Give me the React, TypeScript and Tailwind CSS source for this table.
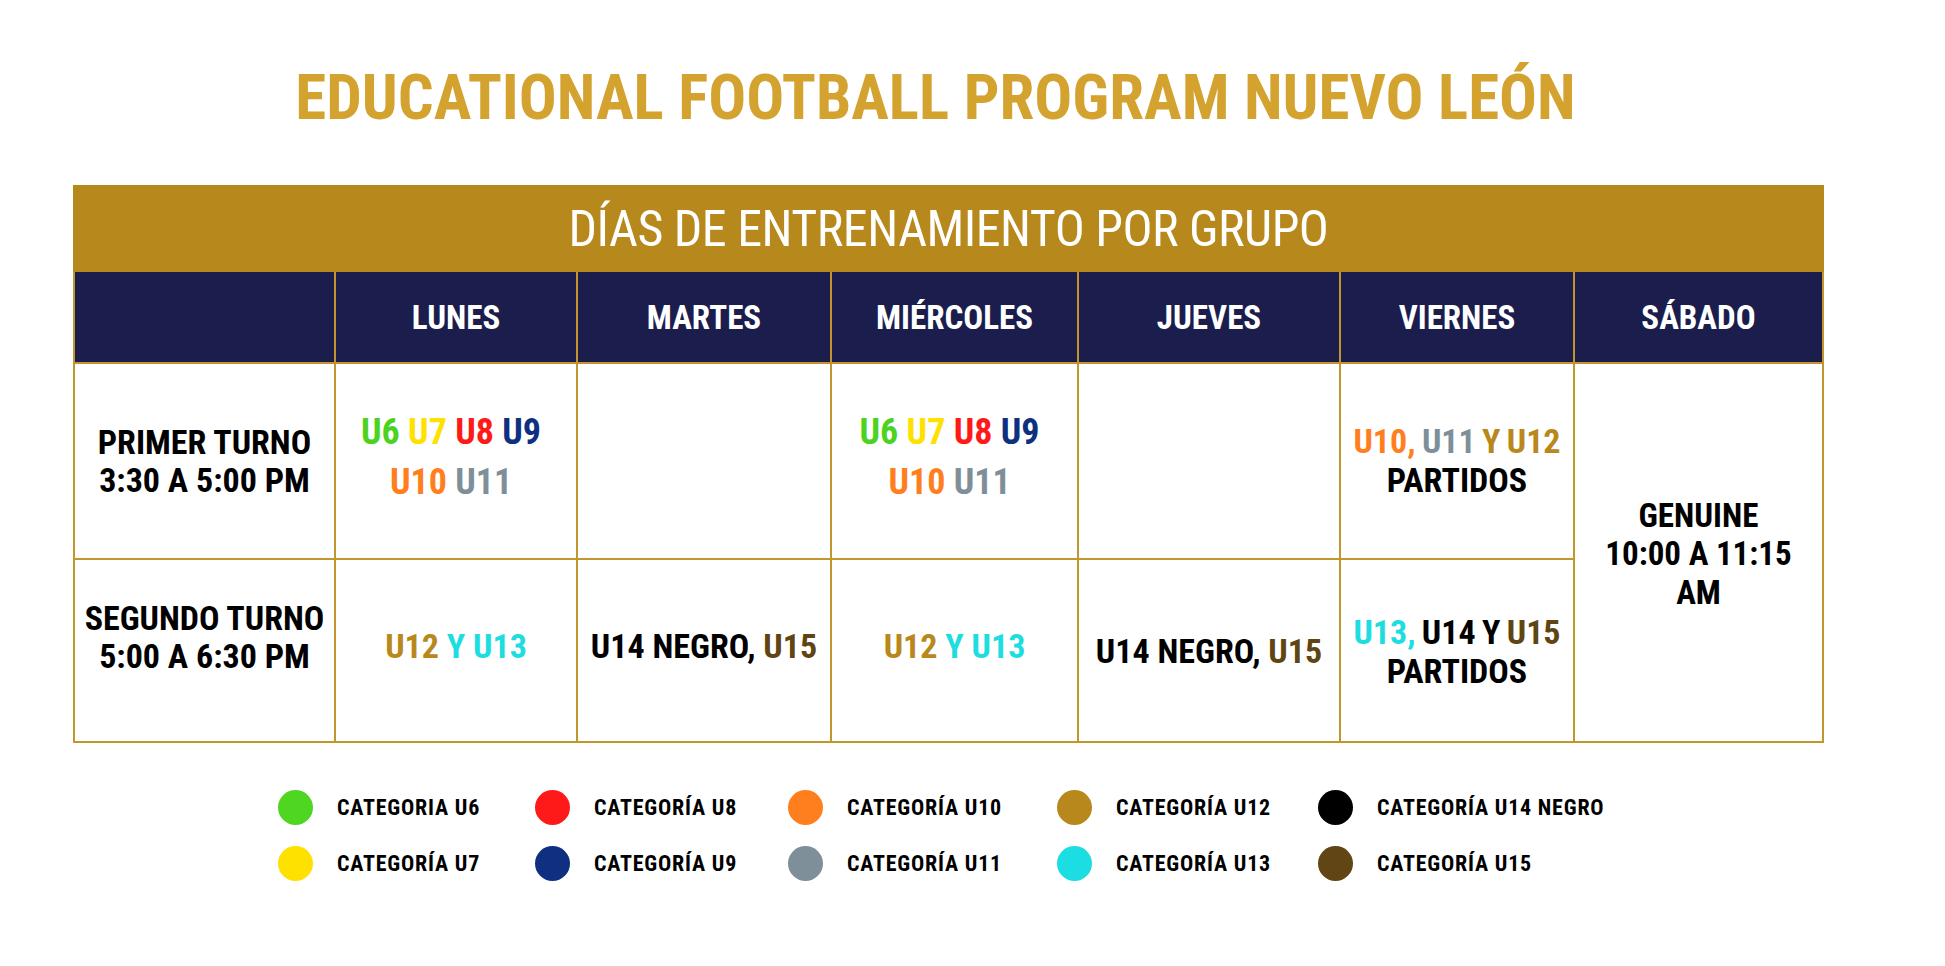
import React from 'react';

const U6 = 'text-[#4cd31f]';
const U7 = 'text-[#ffe100]';
const U8 = 'text-[#ff1a1a]';
const U9 = 'text-[#0f2f80]';
const U10 = 'text-[#ff7f1e]';
const U11 = 'text-[#7f8f99]';
const U12 = 'text-[#b8881c]';
const U13 = 'text-[#1edde0]';
const U15 = 'text-[#5f4512]';

function Head({ children }: { children: React.ReactNode }) {
  return (
    <div className="bg-[#1b1e4d] flex items-center justify-center text-white text-[33px] font-bold leading-none">
      {children}
    </div>
  );
}

function Cell({ children, className = '' }: { children?: React.ReactNode; className?: string }) {
  return (
    <div className={`bg-white flex flex-col items-center justify-center text-center text-black font-bold text-[34px] ${className}`}>
      {children}
    </div>
  );
}

function Early() {
  return (
    <div className="flex flex-col items-center leading-[50px] text-[36px] mb-[9px] mr-[10px] whitespace-nowrap">
      <div>
        <span className={U6}>U6</span> <span className={U7}>U7</span> <span className={U8}>U8</span>{' '}
        <span className={U9}>U9</span>
      </div>
      <div>
        <span className={U10}>U10</span> <span className={U11}>U11</span>
      </div>
    </div>
  );
}

function U12U13() {
  return (
    <div className="leading-[40px] text-[34px] mb-[10px] whitespace-nowrap">
      <span className={U12}>U12</span> <span className={U13}>Y U13</span>
    </div>
  );
}

function U14U15({ className = '' }: { className?: string }) {
  return (
    <div className={`leading-[40px] text-[34px] whitespace-nowrap ${className}`}>
      U14 NEGRO, <span className={U15}>U15</span>
    </div>
  );
}

const legend: { color: string; label: string }[] = [
  { color: 'bg-[#4fd620]', label: 'CATEGORIA U6' },
  { color: 'bg-[#ff1a1a]', label: 'CATEGORÍA U8' },
  { color: 'bg-[#ff7f1e]', label: 'CATEGORÍA U10' },
  { color: 'bg-[#b8881c]', label: 'CATEGORÍA U12' },
  { color: 'bg-black', label: 'CATEGORÍA U14 NEGRO' },
  { color: 'bg-[#ffe100]', label: 'CATEGORÍA U7' },
  { color: 'bg-[#0f3080]', label: 'CATEGORÍA U9' },
  { color: 'bg-[#7f8f99]', label: 'CATEGORÍA U11' },
  { color: 'bg-[#1cdde2]', label: 'CATEGORÍA U13' },
  { color: 'bg-[#614514]', label: 'CATEGORÍA U15' },
];

export default function App() {
  return (
    <div className="min-h-screen w-full bg-white font-['Roboto_Condensed','Roboto',sans-serif] [font-stretch:75%]">
      <div className="ml-[73px] w-[1751px] pt-[66px]">
        <h1 className="text-center text-[63px] leading-[64px] font-bold text-[#d4a22e] pr-[26px]">
          EDUCATIONAL FOOTBALL PROGRAM NUEVO LEÓN
        </h1>
        <div className="mt-[55px] h-[87px] bg-[#b7881b] flex items-center justify-center text-white text-[50px] tracking-[-0.5px] font-normal leading-none">
          DÍAS DE ENTRENAMIENTO POR GRUPO
        </div>
        <div className="grid grid-cols-[259px_240px_252px_245px_260px_232px_247px] grid-rows-[90px_194px_181px] gap-[2px] bg-[#c3952e] px-[2px] pb-[2px]">
          <Head>{''}</Head>
          <Head>LUNES</Head>
          <Head>MARTES</Head>
          <Head>MIÉRCOLES</Head>
          <Head>JUEVES</Head>
          <Head>VIERNES</Head>
          <Head>SÁBADO</Head>

          <Cell>
            <div className="leading-[38px] text-[34px] whitespace-nowrap">
              <div>PRIMER TURNO</div>
              <div>3:30 A 5:00 PM</div>
            </div>
          </Cell>
          <Cell>
            <Early />
          </Cell>
          <Cell />
          <Cell>
            <Early />
          </Cell>
          <Cell />
          <Cell>
            <div className="leading-[39px] text-[34px] whitespace-nowrap [word-spacing:-1.5px]">
              <div>
                <span className={U10}>U10,</span> <span className={U11}>U11</span>{' '}
                <span className={U12}>Y U12</span>
              </div>
              <div>PARTIDOS</div>
            </div>
          </Cell>
          <Cell className="row-span-2">
            <div className="leading-[38.5px] text-[33px] mt-[4px] whitespace-nowrap">
              <div>GENUINE</div>
              <div>10:00 A 11:15</div>
              <div>AM</div>
            </div>
          </Cell>

          <Cell>
            <div className="leading-[38px] text-[34px] mb-[28px] whitespace-nowrap">
              <div>SEGUNDO TURNO</div>
              <div>5:00 A 6:30 PM</div>
            </div>
          </Cell>
          <Cell>
            <U12U13 />
          </Cell>
          <Cell>
            <U14U15 className="mb-[10px]" />
          </Cell>
          <Cell>
            <U12U13 />
          </Cell>
          <Cell>
            <U14U15 />
          </Cell>
          <Cell>
            <div className="leading-[39px] text-[34px] mt-[3px] whitespace-nowrap [word-spacing:-1.5px]">
              <div>
                <span className={U13}>U13,</span> U14 Y <span className={U15}>U15</span>
              </div>
              <div>PARTIDOS</div>
            </div>
          </Cell>
        </div>

        <div className="ml-[205px] mt-[47px] grid grid-cols-[257px_253px_269px_261px_auto] gap-y-[21px]">
          {legend.map((l) => (
            <div key={l.label} className="flex items-center gap-[24px] h-[35px]">
              <div className={`w-[35px] h-[35px] rounded-full shrink-0 ${l.color}`} />
              <div className="text-[22px] tracking-[0.8px] font-bold leading-none text-black whitespace-nowrap">
                {l.label}
              </div>
            </div>
          ))}
        </div>
      </div>
    </div>
  );
}
